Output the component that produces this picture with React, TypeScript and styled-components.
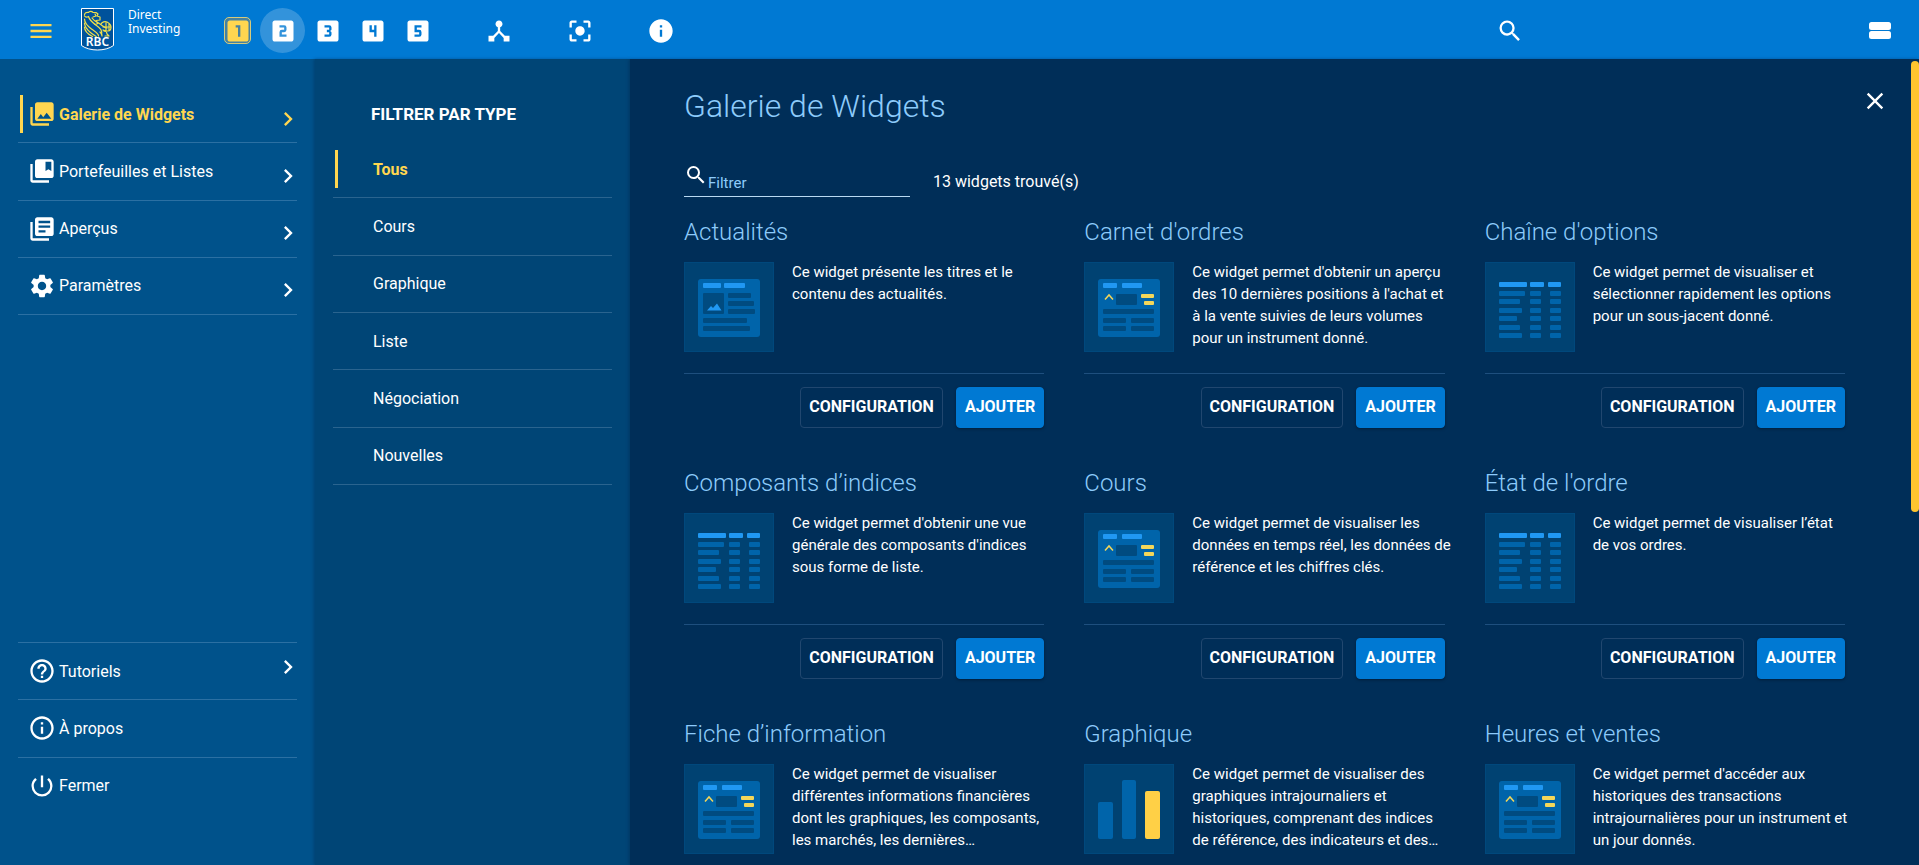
import React, { useState } from 'react';
import styled, { createGlobalStyle } from 'styled-components';
import type { IconType } from 'react-icons';
import {
  MdCenterFocusStrong,
  MdChevronRight,
  MdClose,
  MdCollections,
  MdCollectionsBookmark,
  MdDeviceHub,
  MdHelpOutline,
  MdInfo,
  MdInfoOutline,
  MdLibraryBooks,
  MdLooks3,
  MdLooks4,
  MdLooks5,
  MdLooksOne,
  MdLooksTwo,
  MdMenu,
  MdPowerSettingsNew,
  MdSearch,
  MdSettings,
} from 'react-icons/md';

const colors = {
  header: '#0079d3',
  nav: '#00528b',
  filter: '#004576',
  main: '#002e58',
  accent: '#ffd650',
  title: '#8dcbfb',
  tile: '#004272',
  sheet: '#0064aa',
  sheetDark: '#004b80',
  bright: '#2098f3',
};

const GlobalStyle = createGlobalStyle`
  *, *::before, *::after { box-sizing: border-box; }
  body {
    margin: 0;
    background: ${colors.main};
    color: #fff;
    font-family: Roboto, "Liberation Sans", sans-serif;
    font-size: 16px;
  }
  h1, h2, p, ul { margin: 0; padding: 0; }
  ul { list-style: none; }
  button, input { font: inherit; color: inherit; }
  svg { display: block; flex: none; }
`;

const Page = styled.div`
  display: flex;
  flex-direction: column;
  height: 100vh;
  overflow: hidden;
`;

const Header = styled.header`
  display: flex;
  align-items: center;
  flex: none;
  height: 59px;
  padding: 2px 17px 0 18px;
  background: ${colors.header};
`;

const IconButton = styled.button<{ $accent?: boolean }>`
  display: flex;
  align-items: center;
  justify-content: center;
  flex: none;
  width: 45px;
  height: 45px;
  padding: 0;
  border: 0;
  border-radius: 50%;
  background: transparent;
  color: ${(p) => (p.$accent ? colors.accent : '#fff')};
  cursor: pointer;
`;

const Brand = styled.a`
  display: flex;
  align-items: flex-start;
  gap: 14px;
  margin: 0 35px 0 18px;
  padding-bottom: 2px;
  color: #fff;
  text-decoration: none;
`;

const BrandText = styled.span`
  display: flex;
  flex-direction: column;
  font: 12px/14px "Noto Sans", "Open Sans", sans-serif;
`;

const Workspaces = styled.nav`
  display: flex;
`;

const WorkspaceButton = styled(IconButton)<{ $hovered?: boolean }>`
  background: ${(p) => (p.$hovered ? 'rgba(255, 255, 255, 0.2)' : 'transparent')};
`;

const ActiveFrame = styled.span`
  display: flex;
  align-items: center;
  justify-content: center;
  width: 27px;
  height: 27px;
  border: 1px solid #d6cb7c;
  border-radius: 5px;
  background: #4581a0;
`;

const Tools = styled.div`
  display: flex;
  gap: 36px;
  margin-left: 36px;
`;

const HeaderEnd = styled.div`
  display: flex;
  justify-content: space-between;
  width: 415px;
  margin-left: auto;
`;

const Body = styled.div`
  display: flex;
  flex: 1;
  min-height: 0;
`;

const SideNav = styled.nav`
  display: flex;
  flex-direction: column;
  justify-content: space-between;
  flex: none;
  width: 315px;
  padding: 27px 18px 51px;
  background: ${colors.nav};
`;

const RowList = styled.ul<{ $minHeight: number }>`
  display: grid;
  grid-auto-rows: 1fr;
  min-height: ${(p) => p.$minHeight}px;
`;

const NavItem = styled.li<{ $edge: 'top' | 'bottom' }>`
  border: 0 solid #2b70a3;
  border-${(p) => p.$edge}-width: 1px;
`;

const NavButton = styled.button<{ $active?: boolean }>`
  display: flex;
  align-items: center;
  gap: 3px;
  width: 100%;
  height: 100%;
  padding: 0 0 0 10px;
  border: 0;
  background: linear-gradient(${colors.accent}, ${colors.accent}) 2px center / ${(p) => (p.$active ? '3px' : '0')} 38px no-repeat;
  color: ${(p) => (p.$active ? colors.accent : '#fff')};
  font-weight: ${(p) => (p.$active ? 700 : 400)};
  text-align: left;
  cursor: pointer;
`;

const Chevron = styled(MdChevronRight)<{ $raised?: boolean }>`
  margin: ${(p) => (p.$raised ? '0 -5px 8px auto' : '9px -5px 0 auto')};
`;

const FilterPanel = styled.section`
  flex: none;
  width: 315px;
  padding: 43px 18px 0;
  background: ${colors.filter};
  box-shadow: -1px 0 3px rgba(0, 30, 60, 0.35);
`;

const FilterHeading = styled.h2`
  margin-bottom: 15px;
  padding-left: 38px;
  font-size: 17px;
  font-weight: 700;
  line-height: 24px;
`;

const FilterItem = styled(NavItem)`
  border-color: #2a648f;
`;

const FilterButton = styled(NavButton)`
  padding-left: 40px;
`;

const Main = styled.main`
  position: relative;
  flex: 1;
  min-width: 0;
  padding: 27px 74px 0 54px;
  overflow: hidden;
  background: ${colors.main};
  box-shadow: -1px 0 3px rgba(0, 30, 60, 0.35);
`;

const ScrollThumb = styled.div`
  position: absolute;
  top: 2px;
  right: 0;
  width: 8px;
  height: 56%;
  border-radius: 4px;
  background: #ffc52f;
`;

const TitleRow = styled.div`
  display: flex;
  align-items: flex-start;
  justify-content: space-between;
  height: 45px;
  margin-right: -52px;
`;

const Title = styled.h1`
  color: ${colors.title};
  font-size: 32px;
  font-weight: 300;
  line-height: 40px;
`;

const CloseButton = styled(IconButton)`
  margin-top: -8px;
`;

const SearchRow = styled.form`
  display: flex;
  align-items: flex-end;
  gap: 23px;
  margin-top: 30px;
`;

const SearchField = styled.label`
  display: flex;
  align-items: flex-start;
  width: 226px;
  height: 36px;
  padding-top: 2px;
  border-bottom: 1px solid #b9d9f2;
`;

const SearchInput = styled.input`
  flex: 1;
  min-width: 0;
  height: 32px;
  padding: 8px 0 0;
  border: 0;
  outline: 0;
  background: transparent;
  font-size: 15px;
  &::placeholder { color: ${colors.title}; opacity: 1; }
`;

const ResultCount = styled.span`
  line-height: 30px;
`;

const Cards = styled.div`
  display: grid;
  grid-template-columns: repeat(3, minmax(0, 1fr));
  gap: 38px 40px;
  margin-top: 18px;
`;

const Card = styled.article`
  display: flex;
  flex-direction: column;
`;

const CardTitle = styled.h2`
  color: ${colors.title};
  font-size: 24px;
  font-weight: 300;
  line-height: 34px;
`;

const CardBody = styled.div`
  display: flex;
  gap: 18px;
  min-height: 125px;
  padding-top: 13px;
  border-bottom: 1px solid #1e4f7e;
`;

const CardText = styled.p`
  flex: 1;
  min-width: 0;
  margin-top: -1px;
  margin-right: -10px;
  font-size: 15px;
  line-height: 22px;
`;

const CardActions = styled.div`
  display: flex;
  justify-content: flex-end;
  gap: 13px;
  padding-top: 13px;
`;

const ActionButton = styled.button<{ $primary?: boolean }>`
  height: 41px;
  padding: 0 8px 2px;
  border: 1px solid ${(p) => (p.$primary ? colors.header : '#21476f')};
  border-radius: 4px;
  background: ${(p) => (p.$primary ? colors.header : 'transparent')};
  box-shadow: ${(p) => (p.$primary ? '0 1px 3px rgba(0, 0, 0, 0.35)' : 'none')};
  font-size: 16px;
  font-weight: 700;
  cursor: pointer;
`;

const ICON = 28;

function Shield() {
  return (
    <svg width="33" height="43" viewBox="0 0 33 43" aria-label="RBC" role="img">
      <path d="M.5.5h32v37c-4 3-10 4.500-16 4.500S4.500 40.500.5 37.500z" fill="#00529b" stroke="#fff" />
      <g fill="none" stroke="#f1e04a" strokeWidth="1.200" strokeLinecap="round" strokeLinejoin="round">
        <path d="M3.500 7c0-2 2-3 4-2.500C8 3 11 3 12 4.500h3l2 1.500-1 2 3 1v3l-4 .5 2 3-3 1" />
        <path d="M3.500 8c1 1.500 3 1 4 .5 1 4 4 6 8 9s6 5 5 9" />
        <path d="M3.500 11c0 4 3 7 7 10s7 4 7 7" />
        <path d="M3.500 15c0 4 3 7 6 9.500s5 3 6 4.500" />
        <path d="M3.500 19c0 4 3 7 8 9.500" />
        <path d="M11 10c2 3 5 4 8 6s4 4 7 4M14 6l1 2-3 1" />
        <path d="M20 16c1-2 4-3 6-2s4 2 4 5-1 4-3 4-4 0-5-1M22 19h7M25 14v8M28 16v6" />
        <path d="M23 23c2 0 3 2 3 3l2 2h-4M19 24c1 1 2 2 2 4" />
      </g>
      <text x="16.500" y="38" textAnchor="middle" fill="#fff" fontFamily="Noto Sans, sans-serif" fontWeight="600" fontSize="12">
        RBC
      </text>
    </svg>
  );
}

function StreamIcon() {
  return (
    <svg width="22" height="18" viewBox="0 0 22 18" fill="#fff" aria-hidden="true">
      <rect width="22" height="8" rx="2.500" />
      <rect y="9" width="22" height="8" rx="2.500" />
    </svg>
  );
}

type Picture = 'news' | 'quote' | 'table' | 'chart';

type Bar = [x: number, y: number, width: number];

const newsBars: Bar[] = [[44, 31, 23], [44, 39, 26], [44, 47, 27], [19, 56, 44], [19, 64, 47]];
const quoteBars: Bar[] = [[19, 47, 51], [19, 56, 23], [47, 56, 23], [19, 64, 23], [47, 64, 23]];
const firstColumn = [26, 21, 23, 18, 21, 23];

function Bars({ bars, fill }: { bars: Bar[]; fill: string }) {
  return (
    <g fill={fill}>
      {bars.map(([x, y, width]) => (
        <rect key={`${x}-${y}`} x={x} y={y} width={width} height="5" rx="1" />
      ))}
    </g>
  );
}

function WidgetPicture({ kind }: { kind: Picture }) {
  return (
    <svg width="90" height="90" viewBox="0 0 90 90" aria-hidden="true">
      <rect width="90" height="90" fill={colors.tile} />
      <rect x=".5" y=".5" width="89" height="89" fill="none" stroke="#00487c" />
      {(kind === 'news' || kind === 'quote') && (
        <rect x="14" y="17" width="62" height="58" rx="3" fill={colors.sheet} />
      )}
      {kind === 'news' && (
        <>
          <Bars fill={colors.bright} bars={[[19, 21, 18], [40, 21, 21]]} />
          <rect x="19" y="31" width="21" height="21" rx="1" fill={colors.sheetDark} />
          <path d="M23 48.500l4-4.500 2 2 4-4.500 4.500 7z" fill={colors.bright} />
          <Bars fill={colors.sheetDark} bars={newsBars} />
        </>
      )}
      {kind === 'quote' && (
        <>
          <Bars fill={colors.bright} bars={[[19, 21, 14], [38, 21, 20]]} />
          <rect x="32" y="32" width="21" height="11" rx="1" fill={colors.sheetDark} />
          <path d="M21 37.500l4-4.500 4 4.500" fill="none" stroke="#f2d65a" strokeWidth="1.500" />
          <rect x="57" y="32" width="13" height="4" rx="1" fill="#f2d65a" />
          <rect x="60" y="39" width="10" height="4" rx="1" fill="#f2d65a" />
          <Bars fill={colors.sheetDark} bars={quoteBars} />
        </>
      )}
      {kind === 'table' && (
        <>
          <Bars fill={colors.bright} bars={[[14, 20, 28], [45, 20, 14], [63, 20, 13]]} />
          {firstColumn.map((width, i) => {
            const y = 29 + Math.round(i * 8.4);
            return <Bars key={y} fill={colors.sheet} bars={[[14, y, width], [45, y, 11], [65, y, 11]]} />;
          })}
        </>
      )}
      {kind === 'chart' && (
        <>
          <rect x="14" y="38" width="15" height="37" rx="2" fill={colors.sheet} />
          <rect x="38" y="16" width="14" height="59" rx="2" fill={colors.sheet} />
          <rect x="61" y="27" width="15" height="48" rx="2" fill="#ffd046" />
        </>
      )}
    </svg>
  );
}

interface NavEntry {
  label: string;
  Icon: IconType;
  chevron?: boolean;
}

const topEntries: NavEntry[] = [
  { label: 'Galerie de Widgets', Icon: MdCollections, chevron: true },
  { label: 'Portefeuilles et Listes', Icon: MdCollectionsBookmark, chevron: true },
  { label: 'Aperçus', Icon: MdLibraryBooks, chevron: true },
  { label: 'Paramètres', Icon: MdSettings, chevron: true },
];

const bottomEntries: NavEntry[] = [
  { label: 'Tutoriels', Icon: MdHelpOutline, chevron: true },
  { label: 'À propos', Icon: MdInfoOutline },
  { label: 'Fermer', Icon: MdPowerSettingsNew },
];

const filters = ['Tous', 'Cours', 'Graphique', 'Liste', 'Négociation', 'Nouvelles'];

const widgets: { title: string; text: string; picture: Picture }[] = [
  { title: 'Actualités', picture: 'news', text: 'Ce widget présente les titres et le contenu des actualités.' },
  { title: "Carnet d'ordres", picture: 'quote', text: "Ce widget permet d'obtenir un aperçu des 10 dernières positions à l'achat et à\u00a0la vente suivies de leurs volumes pour un instrument donné." },
  { title: "Chaîne d'options", picture: 'table', text: 'Ce widget permet de visualiser et sélectionner rapidement les options pour un sous-jacent donné.' },
  { title: 'Composants d’indices', picture: 'table', text: "Ce widget permet d'obtenir une vue générale des composants d'indices sous forme de liste." },
  { title: 'Cours', picture: 'quote', text: 'Ce widget permet de visualiser les données en temps réel, les données de référence et les chiffres clés.' },
  { title: "État de l'ordre", picture: 'table', text: 'Ce widget permet de visualiser l’état de\u00a0vos ordres.' },
  { title: 'Fiche d’information', picture: 'quote', text: 'Ce widget permet de visualiser différentes informations financières dont les graphiques, les composants, les marchés, les dernières…' },
  { title: 'Graphique', picture: 'chart', text: 'Ce widget permet de visualiser des graphiques intrajournaliers et historiques, comprenant des indices de\u00a0référence, des indicateurs et des…' },
  { title: 'Heures et ventes', picture: 'quote', text: "Ce widget permet d'accéder aux historiques des transactions intrajournalières pour un instrument et un jour donnés." },
];

const workspaceIcons = [MdLooksTwo, MdLooks3, MdLooks4, MdLooks5];

export default function App() {
  const [section, setSection] = useState('Galerie de Widgets');
  const [filter, setFilter] = useState('Tous');
  const [query, setQuery] = useState('');

  return (
    <>
      <GlobalStyle />
      <Page>
        <Header>
          <IconButton $accent aria-label="Menu"><MdMenu size={ICON} /></IconButton>
          <Brand href="#">
            <Shield />
            <BrandText>
              <span>Direct</span>
              <span>Investing</span>
            </BrandText>
          </Brand>
          <Workspaces>
            <WorkspaceButton $accent aria-label="1">
              <ActiveFrame><MdLooksOne size={ICON} /></ActiveFrame>
            </WorkspaceButton>
            {workspaceIcons.map((Icon, i) => (
              <WorkspaceButton key={i} $hovered={i === 0} aria-label={String(i + 2)}>
                <Icon size={ICON} />
              </WorkspaceButton>
            ))}
          </Workspaces>
          <Tools>
            <IconButton aria-label="Liens"><MdDeviceHub size={ICON} /></IconButton>
            <IconButton aria-label="Centrer"><MdCenterFocusStrong size={ICON} /></IconButton>
            <IconButton aria-label="Info"><MdInfo size={ICON} /></IconButton>
          </Tools>
          <HeaderEnd>
            <IconButton aria-label="Rechercher"><MdSearch size={ICON} /></IconButton>
            <IconButton aria-label="Affichage"><StreamIcon /></IconButton>
          </HeaderEnd>
        </Header>
        <Body>
          <SideNav>
            <RowList $minHeight={229}>
              {topEntries.map(({ label, Icon }) => (
                <NavItem key={label} $edge="bottom">
                  <NavButton $active={section === label} onClick={() => setSection(label)}>
                    <Icon size={ICON} />
                    {label}
                    <Chevron size={ICON} />
                  </NavButton>
                </NavItem>
              ))}
            </RowList>
            <RowList $minHeight={172}>
              {bottomEntries.map(({ label, Icon, chevron }) => (
                <NavItem key={label} $edge="top">
                  <NavButton>
                    <Icon size={ICON} />
                    {label}
                    {chevron && <Chevron size={ICON} $raised />}
                  </NavButton>
                </NavItem>
              ))}
            </RowList>
          </SideNav>
          <FilterPanel>
            <FilterHeading>FILTRER PAR TYPE</FilterHeading>
            <RowList $minHeight={344}>
              {filters.map((label) => (
                <FilterItem key={label} $edge="bottom">
                  <FilterButton $active={filter === label} onClick={() => setFilter(label)}>{label}</FilterButton>
                </FilterItem>
              ))}
            </RowList>
          </FilterPanel>
          <Main>
            <TitleRow>
              <Title>Galerie de Widgets</Title>
              <CloseButton aria-label="Fermer la galerie"><MdClose size={ICON} /></CloseButton>
            </TitleRow>
            <SearchRow>
              <SearchField>
                <MdSearch size={24} />
                <SearchInput aria-label="Filtrer" placeholder="Filtrer" value={query} onChange={(e) => setQuery(e.target.value)} />
              </SearchField>
              <ResultCount>13 widgets trouvé(s)</ResultCount>
            </SearchRow>
            <Cards>
              {widgets.map((widget) => (
                <Card key={widget.title}>
                  <CardTitle>{widget.title}</CardTitle>
                  <CardBody>
                    <WidgetPicture kind={widget.picture} />
                    <CardText>{widget.text}</CardText>
                  </CardBody>
                  <CardActions>
                    <ActionButton>CONFIGURATION</ActionButton>
                    <ActionButton $primary>AJOUTER</ActionButton>
                  </CardActions>
                </Card>
              ))}
            </Cards>
            <ScrollThumb />
          </Main>
        </Body>
      </Page>
    </>
  );
}
